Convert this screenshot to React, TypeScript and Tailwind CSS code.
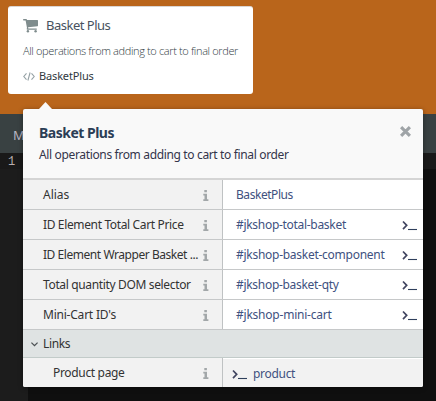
function Prompt() {
  return (
    <svg width="15" height="12" viewBox="0 0 15 12" fill="none" className="shrink-0">
      <path d="M1 1.5 4.7 5.3 1 9.1" stroke="#414560" strokeWidth="1.7" />
      <path d="M6 9.5h9" stroke="#2f405c" strokeWidth="1.1" />
    </svg>
  );
}

function Cart() {
  return (
    <svg width="15" height="14" viewBox="0 0 15 14" className="shrink-0" fill="#7f8c8d">
      <path d="M0 .7C0 .3.3 0 .7 0h2.5c.5 0 .7.4.8 1h10.4c.4 0 .6.3.6.6v5c0 .3-.2.5-.5.6L5.1 8.3l.2 1.2h8c.9 0 .9 1.2 0 1.2H4.2c-.5 0-.7-.4-.5-.9l.3-.7L2.6 1.4H.7A.7.7 0 0 1 0 .7Z" />
      <circle cx="4.9" cy="12.3" r="1.2" />
      <circle cx="12.6" cy="12.3" r="1.2" />
    </svg>
  );
}

function Code() {
  return (
    <svg width="12" height="9" viewBox="0 0 12 9" className="shrink-0" fill="none" stroke="#95a1a5" strokeWidth="1.1">
      <path d="M3.5 1.3.8 4.5l2.7 3.2M8.5 1.3l2.7 3.2-2.7 3.2M7.1.5 4.9 8.5" />
    </svg>
  );
}

function Info() {
  return (
    <svg width="6" height="11" viewBox="0 0 6 11" className="mr-[1px] mt-[2px] shrink-0" fill="#a2a7a9">
      <path d="M1.3 0h2.6v2.2H1.3zM.3 3.8h3.7v5.4h1.4V11H.3V9.2h1.2V5.5H.3z" />
    </svg>
  );
}

function Close() {
  return (
    <svg width="11" height="11" viewBox="0 0 11 11" className="mt-[17px]" fill="none" stroke="#9fa4a7" strokeWidth="3.1">
      <path d="m1.1 1.1 8.8 8.8M9.9 1.1 1.1 9.9" />
    </svg>
  );
}

const rows = [
  { label: "Alias", value: "BasketPlus", prompt: false, lt: "tracking-[0px]", vt: "tracking-[-0.45px]" },
  { label: "ID Element Total Cart Price", value: "#jkshop-total-basket", prompt: true, lt: "tracking-[-0.36px]", vt: "tracking-[-0.3px]" },
  { label: "ID Element Wrapper Basket ...", value: "#jkshop-basket-component", prompt: true, lt: "tracking-[-0.45px]", vt: "tracking-[-0.27px]" },
  { label: "Total quantity DOM selector", value: "#jkshop-basket-qty", prompt: true, lt: "tracking-[-0.35px]", vt: "tracking-[-0.3px]" },
  { label: "Mini-Cart ID's", value: "#jkshop-mini-cart", prompt: true, lt: "tracking-[-0.22px]", vt: "tracking-[-0.22px]" },
];

export default function App() {
  return (
    <div className="relative flex h-[401px] w-[436px] flex-col overflow-hidden bg-[#0f0f0f] font-['Noto_Sans',sans-serif] text-xs whitespace-nowrap">
      <div className="h-[114px] shrink-0 bg-[#b9651b] pt-1.5 pl-2">
        <div className="h-[88px] w-[245px] rounded-[3px] border-t border-[#d9d5d3] bg-white px-[15px] pt-[9px]">
          <div className="flex h-5 items-center">
            <Cart />
            <span className="ml-2 text-[13px] tracking-[-0.5px] text-[#475260]">Basket Plus</span>
          </div>
          <div className="mt-[5px] flex h-5 items-center font-['Open_Sans',sans-serif] text-[11px] font-light tracking-[-0.36px] text-[#303b43]">All operations from adding to cart to final order</div>
          <div className="mt-[5px] flex h-5 items-center">
            <Code />
            <span className="ml-1 text-[11px] tracking-[-0.15px] text-[#303840]">BasketPlus</span>
          </div>
        </div>
      </div>
      <div className="flex h-[39px] shrink-0 items-center bg-[#394142] pt-1 pl-[13px] text-[13px] text-[#b9b6c2]">M</div>
      <div className="flex h-4 shrink-0 items-center bg-[#191919] pt-[1px] pl-2 font-['Noto_Sans',sans-serif] text-[11px] text-[#b9aeb0]">
        <span className="font-['Liberation_Mono',monospace] text-xs">1</span>
      </div>
      <div className="w-7 flex-1 bg-[#1c1c1c]" />

      <div className="absolute top-[109px] left-[23px] w-[400px] rounded-[2px] bg-[#f9f9f9] shadow-[0_1px_5px_rgba(0,0,0,0.4)]">
        <svg className="absolute -top-[7px] left-4" width="13" height="7" viewBox="0 0 13 7">
          <path d="M0 7 6.5 0 13 7Z" fill="#f9f9f9" />
        </svg>
        <div className="flex h-[71px] justify-between border-b-2 border-[#d5d5d5] pr-3 pl-4">
          <div className="pt-3.5">
            <div className="flex h-5 items-center text-sm font-bold tracking-[-0.5px] text-[#2b3d55]">Basket Plus</div>
            <div className="mt-[2px] flex h-5 items-center tracking-[-0.35px] text-[#34354b]">All operations from adding to cart to final order</div>
          </div>
          <Close />
        </div>
        {rows.map((row) => (
          <div key={row.label} className="flex h-[30px] border-b border-[#c6c8c9] bg-white">
            <div className="flex w-[200px] shrink-0 items-center justify-between border-r border-[#bfc2c3] bg-[#f2f2f2] pr-3 pl-5 text-[#333]">
              <span className={row.lt}>{row.label}</span>
              <Info />
            </div>
            <div className="flex flex-1 items-center justify-between pr-1.5 pl-[13px] text-[#405180]">
              <span className={row.vt}>{row.value}</span>
              {row.prompt && <div className="mt-[3px]"><Prompt /></div>}
            </div>
          </div>
        ))}
        <div className="flex h-7 items-center border-b border-[#c2cbc9] bg-[#dfe3e3] pl-2 text-[#333]">
          <svg width="7" height="5" viewBox="0 0 7 5" fill="none" className="mt-[2px]"><path d="M.4.6 3.5 3.7 6.6.6" stroke="#4b5053" strokeWidth="1.3" /></svg>
          <span className="ml-[5px] pt-[1px] tracking-[-0.35px]">Links</span>
        </div>
        <div className="flex h-[29px] rounded-b-[2px] bg-[#f2f2f2]">
          <div className="flex w-[200px] shrink-0 items-center justify-between border-r border-[#bfc2c3] pr-3 pl-[30px] text-[#333]">
            <span className="tracking-[-0.33px]">Product page</span>
            <Info />
          </div>
          <div className="flex flex-1 items-center border-t border-white pl-[9px] text-[#405180]">
            <div className="mt-[3px]"><Prompt /></div>
            <span className="ml-1.5 pt-[1px] tracking-[-0.3px]">product</span>
          </div>
        </div>
      </div>
    </div>
  );
}
